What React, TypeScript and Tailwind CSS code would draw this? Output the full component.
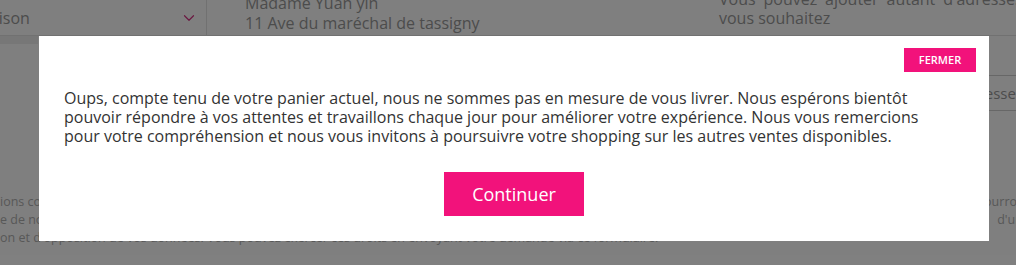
import { ChevronDown } from 'lucide-react';

const PINK = 'bg-[#f2127b]';

const App = () => {
  return (
    <div className="relative h-[265px] w-[1016px] overflow-hidden bg-white font-['Open_Sans',sans-serif]">

      {/* Page behind the modal */}
      <div className="flex h-[36px] border-b border-[#e3e3e3]">
        <div className="flex w-[207px] shrink-0 items-center justify-between border-r border-[#e3e3e3] pr-[8px]">
          <span className="-ml-[37px] text-[16px] text-[#999]">Livraison</span>
          <ChevronDown className="h-[18px] w-[18px] text-[#d63384]" strokeWidth={1.6} />
        </div>
        <div className="-mt-[7px] w-[474px] shrink-0 pl-[38px] text-[16px] leading-[20px] text-[#999]">
          <div>Madame Yuan yin</div>
          <div>11 Ave du maréchal de tassigny</div>
        </div>
        <div className="-mt-[10px] w-[378px] shrink-0 pl-[38px] text-justify text-[16px] leading-[19px] text-[#999]">
          Vous pouvez ajouter autant d'adresses que vous souhaitez
        </div>
      </div>

      <div className="flex justify-between">
        <div className="h-[8px] w-[38px] bg-[#eeeeee]" />
        <div className="mt-[39px] -mr-[59px] flex h-[36px] w-[120px] items-center border-y border-[#cfcfcf] pl-[5px] text-[15px] text-[#999]">
          Adresse
        </div>
      </div>

      <div className="mt-[82px] text-[12.5px] leading-[18px] text-[#b0b0b0]">
        <div className="flex justify-between whitespace-nowrap">
          <span>ions collectées</span>
          <span className="-mr-[40px]">pourront être</span>
        </div>
        <div className="flex justify-between whitespace-nowrap">
          <span>e de nos services</span>
          <span className="-mr-[38px]">d'un droit</span>
        </div>
        <div className="whitespace-nowrap">
          on et d'opposition de vos données. Vous pouvez exercer ces droits en envoyant votre demande via ce formulaire.
        </div>
      </div>

      {/* Dimmer */}
      <div className="absolute inset-0 bg-black/50" />

      {/* Modal */}
      <div className="absolute left-[39px] top-[36px] w-[950px] bg-white pb-[25px] pr-[13px] pt-[12px]">
        <div className="flex justify-end">
          <button className={`${PINK} h-[24px] w-[72px] text-[11px] font-semibold text-white`}>
            FERMER
          </button>
        </div>
        <p className="mt-[17px] pl-[25px] pr-[41px] text-[16px] leading-[19px] text-[#333]">
          Oups, compte tenu de votre panier actuel, nous ne sommes pas en mesure de vous livrer. Nous espérons bientôt pouvoir répondre à vos attentes et travaillons chaque jour pour améliorer votre expérience. Nous vous remercions pour votre compréhension et nous vous invitons à poursuivre votre shopping sur les autres ventes disponibles.
        </p>
        <div className="mt-[26px] flex justify-center pl-[13px]">
          <button className={`${PINK} h-[44px] w-[140px] text-[18px] text-white`}>
            Continuer
          </button>
        </div>
      </div>
    </div>
  );
};

export default App;
